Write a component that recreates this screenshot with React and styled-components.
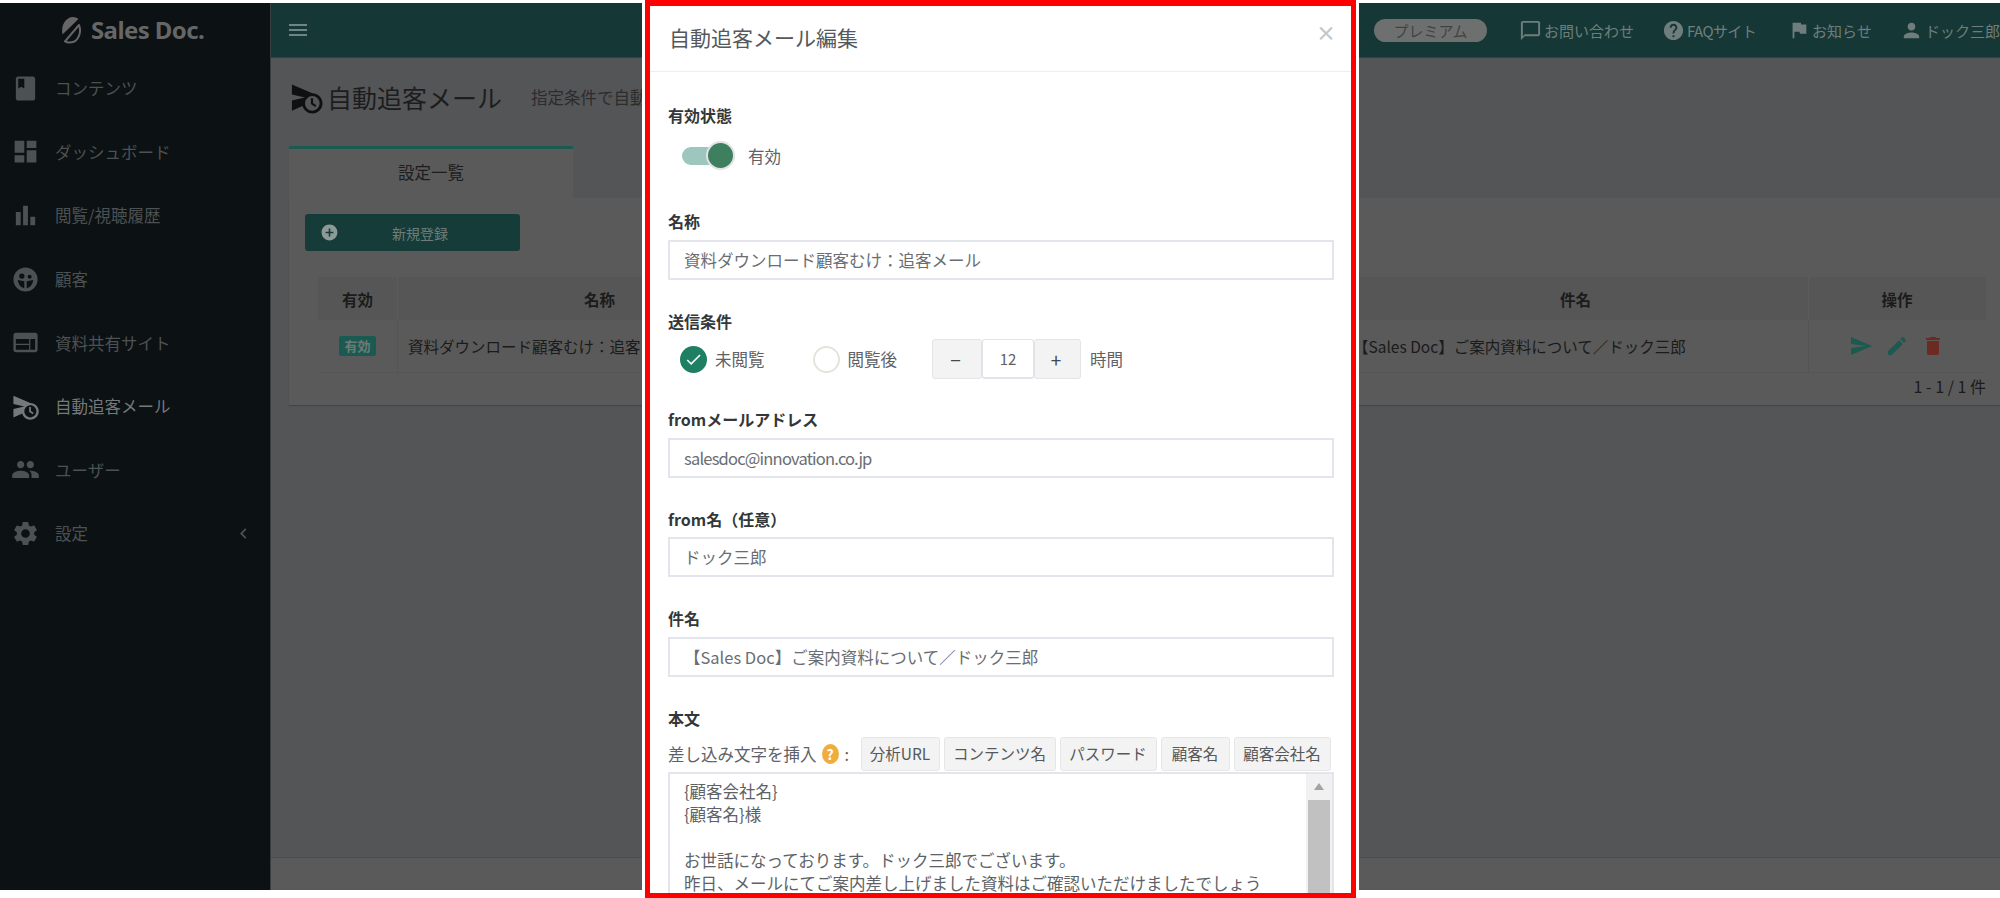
import React from "react";
import styled, { createGlobalStyle } from "styled-components";
import {
    MdBook,
    MdDashboard,
    MdBarChart,
    MdWeb,
    MdScheduleSend,
    MdPeople,
    MdSettings,
    MdChevronLeft,
    MdMenu,
    MdChatBubbleOutline,
    MdHelp,
    MdFlag,
    MdPerson,
    MdSend,
    MdEdit,
    MdDelete,
    MdAddCircle,
    MdCheck,
} from "react-icons/md";

const FONT = `"Noto Sans CJK JP", "Noto Sans", sans-serif`;

const GlobalStyle = createGlobalStyle`
    html, body {
        margin: 0;
        padding: 0;
        background: #fff;
        overflow: hidden;
    }
    * {
        box-sizing: border-box;
    }
    body {
        font-family: ${FONT};
    }
`;

// filled smiley, the icon set only has the outlined one
const FaceIcon = () => (
    <svg width="1em" height="1em" viewBox="0 0 24 24" fill="currentColor">
        <path
            fillRule="evenodd"
            d="M12 2a10 10 0 1 0 0 20 10 10 0 0 0 0-20zM9 7a2.2 2.2 0 1 1 0 4.4A2.2 2.2 0 0 1 9 7zm6.4 1a1.7 1.7 0 1 1 0 3.4 1.7 1.7 0 0 1 0-3.4zM5.6 12.5l5.4 1v5.8c-2.8-.6-5-3.400-5.400-6.800zm12.800 0c-.4 3.400-2.600 6.200-5.400 6.800v-5.800l5.400-1z"
        />
    </svg>
);

const menuItems = [
    { label: "コンテンツ", icon: <MdBook /> },
    { label: "ダッシュボード", icon: <MdDashboard /> },
    { label: "閲覧/視聴履歴", icon: <MdBarChart /> },
    { label: "顧客", icon: <FaceIcon /> },
    { label: "資料共有サイト", icon: <MdWeb /> },
    { label: "自動追客メール", icon: <MdScheduleSend />, active: true },
    { label: "ユーザー", icon: <MdPeople /> },
    { label: "設定", icon: <MdSettings />, arrow: true },
];

const tokens = [
    { label: "分析URL", width: 79 },
    { label: "コンテンツ名", width: 112 },
    { label: "パスワード", width: 97 },
    { label: "顧客名", width: 69 },
    { label: "顧客会社名", width: 97 },
];

const LogoMark = () => (
    <svg width="22" height="28" viewBox="0 0 22 28">
        <path d="M2.500 18.500C.5 9 6 1 13 1c2 0 4 .7 5.500 2z" fill="#666" />
        <path
            d="M19 9c2.500 6 .5 17-9 17.500-2 .1-3.600-.3-5-1.200z"
            fill="none"
            stroke="#666"
            strokeWidth="2"
            strokeLinejoin="round"
        />
    </svg>
);

const App = () => {
    return (
        <>
            <GlobalStyle />
            <Page>
                <Sidebar>
                    <Logo>
                        <LogoMark />
                        <LogoText>Sales Doc.</LogoText>
                    </Logo>
                    <Menu>
                        {menuItems.map((item) => (
                            <MenuItem key={item.label} active={item.active}>
                                <MenuIcon>{item.icon}</MenuIcon>
                                <span>{item.label}</span>
                                {item.arrow && (
                                    <MenuArrow>
                                        <MdChevronLeft />
                                    </MenuArrow>
                                )}
                            </MenuItem>
                        ))}
                    </Menu>
                </Sidebar>
                <Main>
                    <Topbar>
                        <Burger>
                            <MdMenu />
                        </Burger>
                        <TopRight>
                            <PlanPill>プレミアム</PlanPill>
                            <TopLink width={143}>
                                <MdChatBubbleOutline size={23} />
                                お問い合わせ
                            </TopLink>
                            <TopLink width={126} tight>
                                <MdHelp size={23} />
                                FAQサイト
                            </TopLink>
                            <TopLink width={112}>
                                <MdFlag size={22} />
                                お知らせ
                            </TopLink>
                            <TopLink width={96}>
                                <MdPerson size={23} />
                                ドック三郎
                            </TopLink>
                        </TopRight>
                    </Topbar>
                    <Content>
                        <TitleRow>
                            <TitleIcon>
                                <MdScheduleSend />
                            </TitleIcon>
                            <Title>自動追客メール</Title>
                            <Subtitle>指定条件で自動的に追客メールを送信します</Subtitle>
                        </TitleRow>
                        <Tab>設定一覧</Tab>
                        <Card>
                            <AddButton>
                                <AddIcon>
                                    <MdAddCircle size={19} />
                                </AddIcon>
                                <AddLabel>新規登録</AddLabel>
                            </AddButton>
                            <Table>
                                <HeadCell>有効</HeadCell>
                                <HeadCell>名称</HeadCell>
                                <HeadCell>送信条件</HeadCell>
                                <HeadCell>件名</HeadCell>
                                <HeadCell last>操作</HeadCell>
                                <BodyCell center>
                                    <Badge>有効</Badge>
                                </BodyCell>
                                <BodyCell>資料ダウンロード顧客むけ：追客メール</BodyCell>
                                <BodyCell>未閲覧 12時間</BodyCell>
                                <BodyCell>【Sales Doc】ご案内資料について／ドック三郎</BodyCell>
                                <BodyCell center last>
                                    <Actions>
                                        <MdSend color="#1a5a50" />
                                        <MdEdit color="#1a5a50" />
                                        <MdDelete color="#6b2a22" />
                                    </Actions>
                                </BodyCell>
                            </Table>
                            <Pager>1 - 1 / 1 件</Pager>
                        </Card>
                    </Content>
                    <Footer />
                </Main>
            </Page>

            <Modal>
                <ModalHead>
                    <ModalTitle>自動追客メール編集</ModalTitle>
                    <Close>×</Close>
                </ModalHead>
                <Form>
                    <FieldLabel>有効状態</FieldLabel>
                    <ToggleRow>
                        <Toggle>
                            <ToggleKnob />
                        </Toggle>
                        <span>有効</span>
                    </ToggleRow>

                    <FieldLabel>名称</FieldLabel>
                    <Input>資料ダウンロード顧客むけ：追客メール</Input>

                    <FieldLabel>送信条件</FieldLabel>
                    <ConditionRow>
                        <Radio checked>
                            <MdCheck size={19} />
                        </Radio>
                        <RadioText>未閲覧</RadioText>
                        <RadioGap />
                        <Radio />
                        <RadioText>閲覧後</RadioText>
                        <Stepper>
                            <StepButton width={50}>−</StepButton>
                            <StepValue>12</StepValue>
                            <StepButton width={47}>+</StepButton>
                        </Stepper>
                        <StepUnit>時間</StepUnit>
                    </ConditionRow>

                    <FieldLabel>fromメールアドレス</FieldLabel>
                    <Input latin>salesdoc@innovation.co.jp</Input>

                    <FieldLabel>from名（任意）</FieldLabel>
                    <Input>ドック三郎</Input>

                    <FieldLabel>件名</FieldLabel>
                    <Input>【Sales Doc】ご案内資料について／ドック三郎</Input>

                    <FieldLabel>本文</FieldLabel>
                    <TokenRow>
                        <TokenLabel>差し込み文字を挿入</TokenLabel>
                        <HelpDot>?</HelpDot>
                        <TokenColon>:</TokenColon>
                        <Tokens>
                            {tokens.map((token) => (
                                <TokenButton key={token.label} width={token.width}>
                                    {token.label}
                                </TokenButton>
                            ))}
                        </Tokens>
                    </TokenRow>
                    <Editor>
                        <EditorText>
                            <div>{"{顧客会社名}"}</div>
                            <div>{"{顧客名}様"}</div>
                            <br />
                            <div>お世話になっております。ドック三郎でございます。</div>
                            <div>昨日、メールにてご案内差し上げました資料はご確認いただけましたでしょう</div>
                        </EditorText>
                        <ScrollTrack>
                            <ScrollArrow />
                            <ScrollThumb />
                        </ScrollTrack>
                    </Editor>
                </Form>
            </Modal>
        </>
    );
};

const Page = styled.div`
    display: flex;
    height: 887px;
    margin-top: 3px;
    box-shadow: 0 3px 0 #efefef;
    overflow: hidden;
`;

const Sidebar = styled.aside`
    flex: 0 0 271px;
    background: #0c1113;
    border-right: 1px solid #3a3d3e;
`;

const Logo = styled.div`
    display: flex;
    align-items: center;
    height: 53.5px;
    padding-left: 60px;
    gap: 9px;
`;

const LogoText = styled.span`
    font-size: 24px;
    font-weight: 700;
    color: #666;
    font-family: "Noto Sans", sans-serif;
    letter-spacing: -0.6px;
`;

const Menu = styled.nav`
    display: flex;
    flex-direction: column;
`;

const MenuItem = styled.div`
    display: flex;
    align-items: center;
    height: 63.6px;
    padding-left: 11px;
    font-size: 16.5px;
    color: ${(props) => (props.active ? "#74797c" : "#4c5154")};
`;

const MenuIcon = styled.span`
    display: flex;
    font-size: 29px;
    width: 44px;
    color: inherit;
`;

const MenuArrow = styled.span`
    display: flex;
    font-size: 21px;
    margin-left: auto;
    margin-right: 16px;
    color: #4c5154;
`;

const Main = styled.div`
    flex: 1;
    min-width: 0;
    display: flex;
    flex-direction: column;
    background: #545557;
`;

const Topbar = styled.header`
    flex: 0 0 55px;
    display: flex;
    align-items: center;
    background: #153836;
    border-bottom: 1px solid #2c4644;
    padding-left: 15px;
`;

const Burger = styled.span`
    display: flex;
    font-size: 24px;
    color: #6f8583;
`;

const TopRight = styled.div`
    margin-left: auto;
    display: flex;
    align-items: center;
    width: 626px;
    flex-shrink: 0;
`;

const PlanPill = styled.span`
    flex: 0 0 113px;
    height: 23px;
    margin-right: 32px;
    border-radius: 12px;
    background: #6e706f;
    color: #3f4443;
    font-size: 15px;
    line-height: 23px;
    text-align: center;
`;

const TopLink = styled.span`
    flex: 0 0 ${(props) => props.width}px;
    display: flex;
    align-items: center;
    gap: 2px;
    color: #6f7e7c;
    font-size: 15px;
    letter-spacing: ${(props) => (props.tight ? "-0.6px" : "0")};
    white-space: nowrap;
`;

const Content = styled.main`
    flex: 1;
    padding: 0 0 0 18px;
`;

const TitleRow = styled.div`
    display: flex;
    align-items: center;
    height: 88px;
    padding-bottom: 10px;
`;

const TitleIcon = styled.span`
    display: flex;
    font-size: 35px;
    color: #101010;
    width: 38px;
`;

const Title = styled.h1`
    margin: 0;
    font-size: 25px;
    font-weight: 400;
    color: #1d1d1d;
`;

const Subtitle = styled.span`
    margin-left: 29px;
    font-size: 16.5px;
    color: #2c2c2c;
    white-space: nowrap;
`;

const Tab = styled.div`
    width: 284px;
    height: 52px;
    padding-bottom: 4px;
    background: #5a5a5a;
    border-top: 3px solid #1a5a50;
    font-size: 16.5px;
    color: #1d1d1d;
    display: flex;
    align-items: center;
    justify-content: center;
`;

const Card = styled.section`
    width: 1740px;
    height: 207px;
    background: #5a5a5a;
    padding: 16px 0 0 16px;
    box-shadow: 0 1px 1px rgba(0, 0, 0, 0.18);
`;

const AddButton = styled.div`
    width: 215px;
    height: 37px;
    background: #153c38;
    border-radius: 3px;
    display: flex;
    align-items: center;
    padding-left: 15px;
    color: #6f7d7a;
    font-size: 14px;
`;

const AddIcon = styled.span`
    display: flex;
    color: #8e9a98;
`;

const AddLabel = styled.span`
    margin-left: 53px;
`;

const Table = styled.div`
    display: grid;
    grid-template-columns: 80px 404px 541px 466px 177px;
    grid-template-rows: 43px 53px;
    width: 1668px;
    margin: 26px 0 0 13px;
    font-size: 15.5px;
    color: #1b1b1b;
`;

const HeadCell = styled.div`
    background: #565656;
    font-weight: 700;
    font-size: 15.5px;
    display: flex;
    align-items: center;
    justify-content: center;
    border-right: 1px solid ${(props) => (props.last ? "transparent" : "#5c5c5c")};
`;

const BodyCell = styled.div`
    display: flex;
    align-items: center;
    justify-content: ${(props) => (props.center ? "center" : "flex-start")};
    padding: 0 ${(props) => (props.center ? 0 : 10)}px;
    white-space: nowrap;
    overflow: hidden;
    border-right: 1px solid ${(props) => (props.last ? "transparent" : "#555555")};
    border-bottom: 1px solid #565656;
`;

const Badge = styled.span`
    width: 37px;
    height: 20px;
    border-radius: 2px;
    background: #1b5a52;
    color: #6f7a77;
    font-size: 13px;
    font-weight: 700;
    line-height: 20px;
    text-align: center;
`;

const Actions = styled.span`
    display: flex;
    gap: 12px;
    font-size: 24px;
`;

const Pager = styled.div`
    width: 1668px;
    margin-left: 13px;
    margin-top: 1px;
    text-align: right;
    font-size: 16px;
    color: #1b1b1b;
`;

const Footer = styled.footer`
    flex: 0 0 33px;
    background: #5a5a5a;
    border-top: 1px solid #4d4d4d;
`;

const Modal = styled.div`
    position: absolute;
    top: 0;
    left: 645px;
    width: 711px;
    height: 898px;
    background: #fff;
    border: solid #ff0000;
    border-width: 6px 5px 5px;
    box-shadow: -3px 0 0 #fff, 3px 0 0 #fff;
    overflow: hidden;
    color: #5e6266;
`;

const ModalHead = styled.div`
    position: relative;
    height: 66px;
    border-bottom: 1px solid #eeeeee;
    padding: 15px 0 0 19px;
`;

const ModalTitle = styled.h2`
    margin: 0;
    font-size: 21px;
    font-weight: 400;
    line-height: 32px;
    color: #55595c;
`;

const Close = styled.span`
    position: absolute;
    top: 8px;
    right: 15px;
    font-size: 20px;
    font-weight: 700;
    line-height: 38px;
    color: #c6c6c6;
`;

const Form = styled.div`
    padding: 31px 17px 0 18px;
    font-size: 16.5px;
`;

const FieldLabel = styled.div`
    height: 24px;
    line-height: 24px;
    margin-bottom: 6.5px;
    font-size: 16px;
    font-weight: 700;
    color: #33373a;
`;

const ToggleRow = styled.div`
    display: flex;
    align-items: center;
    height: 29px;
    margin: 14px 0 39px 14px;
    gap: 13px;
`;

const Toggle = styled.span`
    position: relative;
    width: 53px;
    height: 18px;
    border-radius: 9px;
    background: #9cc6be;
`;

const ToggleKnob = styled.span`
    position: absolute;
    top: -6px;
    right: 0;
    width: 29px;
    height: 29px;
    border-radius: 50%;
    background: #3e7f60;
    border: 2px solid #e3e3e3;
`;

const Input = styled.div`
    height: 40px;
    margin-bottom: 29px;
    border: 2px solid #e3e4ec;
    padding: 0 14px;
    line-height: 36px;
    color: #6a6e72;
    letter-spacing: ${(props) => (props.latin ? "-0.8px" : "0")};
    white-space: nowrap;
    overflow: hidden;
`;

const ConditionRow = styled.div`
    display: flex;
    align-items: center;
    height: 40px;
    margin: 1px 0 28px;
    padding-left: 12px;
`;

const Radio = styled.span`
    flex: 0 0 27px;
    height: 27px;
    border-radius: 50%;
    display: flex;
    align-items: center;
    justify-content: center;
    color: #fff;
    background: ${(props) => (props.checked ? "#1f7f62" : "#fff")};
    border: ${(props) => (props.checked ? "0" : "2px solid #e6e3dc")};
`;

const RadioText = styled.span`
    margin-left: 8px;
`;

const RadioGap = styled.span`
    width: 48px;
`;

const Stepper = styled.div`
    display: flex;
    height: 40px;
    margin-left: 35px;
`;

const StepButton = styled.span`
    width: ${(props) => props.width}px;
    background: #f3f3f3;
    border: 1px solid #e4e4e8;
    border-radius: 3px;
    display: flex;
    align-items: center;
    justify-content: center;
    padding-right: 3px;
    font-size: 19px;
    color: #44484b;
`;

const StepValue = styled.span`
    width: 52px;
    border: 1px solid #e2e2e8;
    border-width: 1px 1px 2px;
    border-radius: 3px;
    display: flex;
    align-items: center;
    justify-content: center;
    font-size: 15px;
`;

const StepUnit = styled.span`
    margin-left: 9px;
`;

const TokenRow = styled.div`
    display: flex;
    align-items: center;
    height: 34px;
    margin-top: 7.5px;
`;

const TokenLabel = styled.span`
    white-space: nowrap;
`;

const HelpDot = styled.span`
    width: 17px;
    height: 20px;
    margin-left: 5px;
    border-radius: 50%;
    background: #f0ad3e;
    color: #fff;
    font-size: 14px;
    font-weight: 700;
    line-height: 20px;
    text-align: center;
`;

const TokenColon = styled.span`
    margin-left: 6px;
    width: 16px;
`;

const Tokens = styled.div`
    display: flex;
    gap: 4px;
`;

const TokenButton = styled.span`
    width: ${(props) => props.width}px;
    height: 34px;
    background: #f3f3f3;
    border: 1px solid #e6e6e6;
    border-radius: 3px;
    font-size: 15.5px;
    line-height: 31px;
    text-align: center;
    white-space: nowrap;
    color: #55595c;
`;

const Editor = styled.div`
    display: flex;
    height: 200px;
    margin-top: 1px;
    border: 2px solid #e3e4ec;
`;

const EditorText = styled.div`
    flex: 1;
    padding: 6px 14px;
    line-height: 23px;
    white-space: nowrap;
    overflow: hidden;
`;

const ScrollTrack = styled.div`
    flex: 0 0 26px;
    background: #f1f1f1;
    padding: 0 2px;
`;

const ScrollArrow = styled.div`
    width: 0;
    height: 0;
    margin: 9px auto 10px;
    border: 5.5px solid transparent;
    border-top: 0;
    border-bottom: 7px solid #a3a3a3;
`;

const ScrollThumb = styled.div`
    height: 180px;
    background: #c1c1c1;
`;

export default App;
